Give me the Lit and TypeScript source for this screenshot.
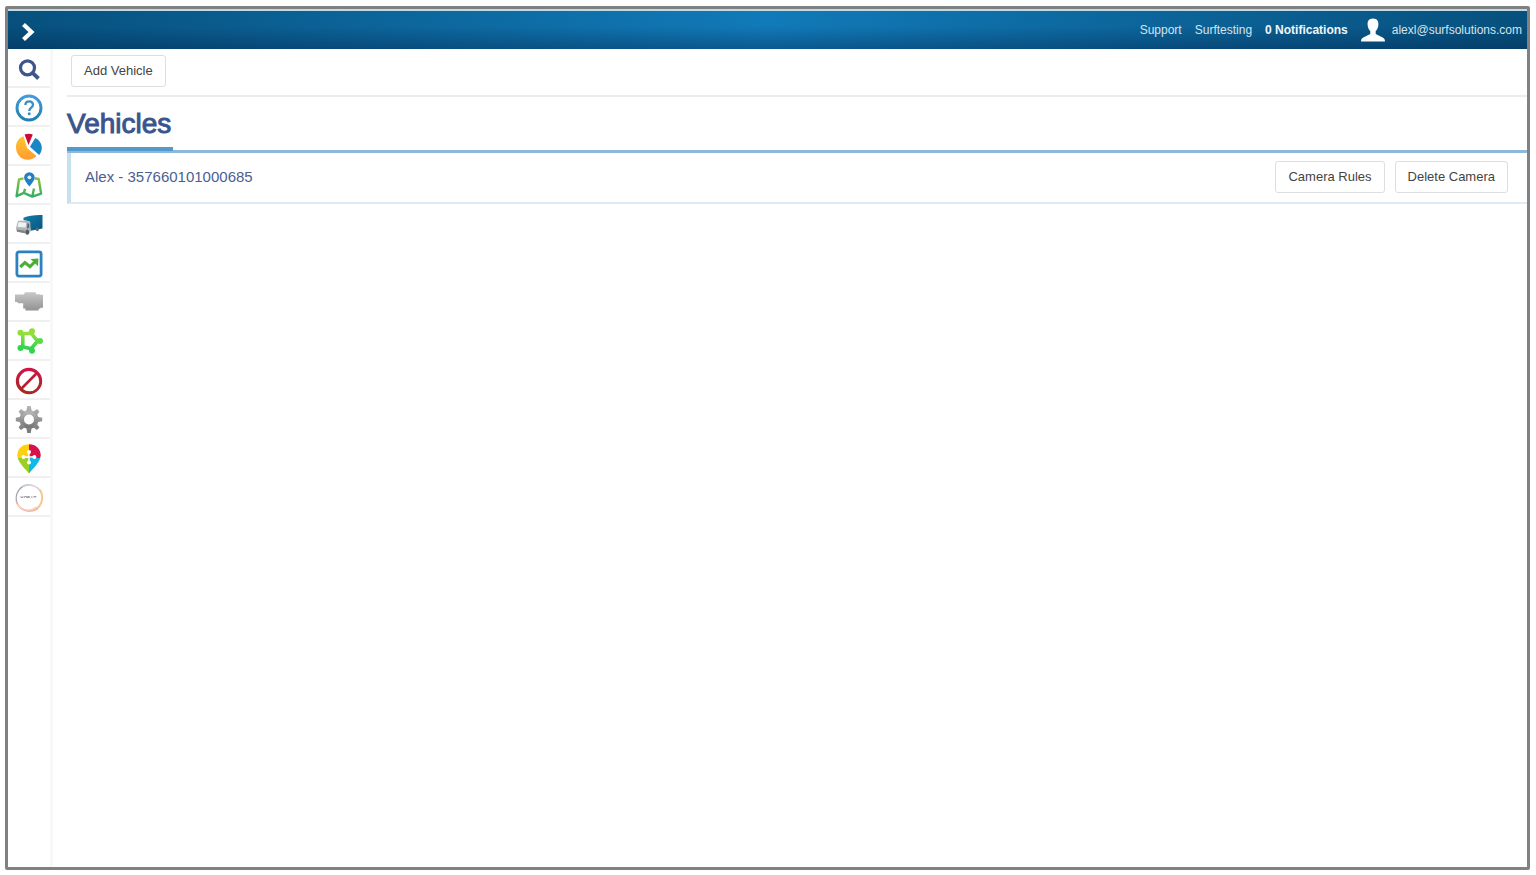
import { LitElement, html, css, svg } from "lit";
import { customElement, property, state } from "lit/decorators.js";

const icons = {
  search: svg`<circle cx="12.5" cy="12.8" r="7" fill="none" stroke="#3f568c" stroke-width="3.2"/><path d="M17.5 17.8 23.5 23.5" stroke="#3f568c" stroke-width="3.8"/>`,
  help: svg`<defs><linearGradient id="h" x2="0" y2="1"><stop stop-color="#429bdd"/><stop offset="1" stop-color="#2280ac"/></linearGradient></defs><circle cx="14" cy="14" r="12" fill="none" stroke="url(#h)" stroke-width="2.9"/><path d="M10.4 11c0-4.6 7.6-4.7 7.6-.3 0 2.9-3.7 3-3.7 6.2" fill="none" stroke="#378fc8" stroke-width="2.3"/><circle cx="14.2" cy="19.8" r="1.5" fill="#378fc8"/>`,
  chart: svg`<defs><linearGradient id="p" x2="0" y2="1"><stop stop-color="#ffc62e"/><stop offset="1" stop-color="#ff9b31"/></linearGradient></defs><path d="M12 15 8.6 3.2C3.8 4.7 1 9 1 14.2 1 21 6 26.8 12.5 26.8c3.5 0 6.6-1.1 9-3.7Z" fill="url(#p)"/><path d="M9.6 1.4c2.7-.9 5.5-.9 8.2 0L13.5 12Z" fill="#c80c38"/><path d="m15 13.7 5.2-8.6c6.4 2.8 9 10.9 3.9 17Z" fill="#1986c8"/>`,
  map: svg`<defs><linearGradient id="m" x2="0" y2="1"><stop stop-color="#8ac43c"/><stop offset="1" stop-color="#36ad63"/></linearGradient></defs><path d="M8.5 6.4 4 7.5 1.6 24.2l7.3-3.3 8.4 3.7 8.8-3L23.7 7l-4-.8M8.9 20.9l1.2-4.1m8.9-.4-1.7 8.2" fill="none" stroke="url(#m)" stroke-width="2.4" stroke-linejoin="round"/><path d="M14.4 14.5C11.5 10.7 9.1 8.3 9.1 5.5a5.3 5.3 0 0 1 10.6 0c0 2.8-2.4 5.2-5.3 9Z" fill="#237fc4"/><circle cx="14.4" cy="5.3" r="1.9" fill="#d8f2ff"/>`,
  truck: svg`<defs><linearGradient id="t" x2="1" y2="1"><stop stop-color="#147caa"/><stop offset="1" stop-color="#06577f"/></linearGradient></defs><path d="M8.5 6.8Q16 3.6 27.5 4v13.5L15.5 19.8 14.6 10.5 8.5 9Z" fill="url(#t)"/><path d="M3 9.7h9.6l2.8 1.7V21L12 22.6 2 20.7 1 17Z" fill="#b0b4b7"/><path d="m3.6 11 7.7.7-.8 4.9-8-.6Z" fill="#eef2f5"/><path d="m12.5 12.2 1.6.5v4l-2 .7Z" fill="#596168"/><path d="m1.6 18.6 8.3 1.2v2.4l-8-1.6Z" fill="#7c8286"/><ellipse cx="12.3" cy="21.2" rx="1.9" ry="2.6" fill="#555b60"/><ellipse cx="22.3" cy="18.2" rx="1.4" ry="2" fill="#59656d"/>`,
  trend: svg`<rect x="1.9" y="1.9" width="24.2" height="24.2" rx="2" fill="#fff" stroke="#2d81c0" stroke-width="2.8"/><path d="m5.2 17 4.8-4.4 5 4 5.7-5.6" fill="none" stroke="#4dae35" stroke-width="3.1"/><path d="m15.5 9 8-.4-.5 7.7Z" fill="#4dae35"/>`,
  engine: svg`<defs><linearGradient id="e" x2="0" y2="1"><stop stop-color="#c8c8c8"/><stop offset="1" stop-color="#929292"/></linearGradient></defs><path d="M0 5.600h8.800V4.500h1V3.200h11v2.100h4.100v.4H28v13h-2.700v1.100h-1.600v1.800H10.400v-2.200H8.200v-5.200H3.400L2 13H0Z" fill="url(#e)"/>`,
  geofence: svg`<defs><linearGradient id="g" x2="0" y2="1"><stop stop-color="#9be03a"/><stop offset="1" stop-color="#2bd44f"/></linearGradient></defs><path d="M7.8 5.800 16 5.200 22.600 13 16 20.800 7.800 18.800Z" fill="none" stroke="url(#g)" stroke-width="3.600" stroke-linejoin="round"/><g fill="#93dc3a"><circle cx="5.500" cy="4.700" r="3"/><circle cx="17" cy="3.200" r="3"/></g><circle cx="25" cy="13" r="3" fill="#5cda46"/><g fill="#35d44e"><circle cx="17" cy="22.800" r="3"/><circle cx="5.500" cy="20" r="3"/></g>`,
  block: svg`<defs><linearGradient id="b" x2="0" y2="1"><stop stop-color="#d11549"/><stop offset="1" stop-color="#a52a1c"/></linearGradient></defs><path fill="url(#b)" fill-rule="evenodd" d="M14 .8a13.2 13.2 0 1 1 0 26.4A13.2 13.2 0 0 1 14 .8Zm6 5.3A9.9 9.9 0 0 0 6.1 20ZM8 22A9.9 9.9 0 0 0 21.9 8Z"/>`,
  settings: svg`<defs><linearGradient id="s" x2="0" y2="1"><stop stop-color="#b5b5b5"/><stop offset="1" stop-color="#777"/></linearGradient></defs><g transform="translate(0 -1)"><path fill="none" stroke="url(#s)" stroke-width="4.6" d="M14 7.2a7.3 7.3 0 1 0 0 14.6 7.3 7.3 0 0 0 0-14.600Z"/><path fill="url(#s)" d="m12.3 1h3.4l1 5h-5.4Zm0 27h3.4l1-5h-5.4ZM.8 12.8v3.4l5 1v-5.4Zm26.4 0v3.4l-5 1v-5.4ZM3.6 6.500 6 4.100l4.200 2.800-3.800 3.800Zm20.800 0L22 4.100l-4.200 2.800 3.800 3.800ZM3.600 22.500 6 24.900l4.200-2.800-3.800-3.800Zm20.800 0L22 24.900l-4.200-2.800 3.800-3.800Z"/></g>`,
  marker: svg`<g transform="translate(0 -1)"><path d="M14 .2C7 .2 2.3 5 2.3 11.5l.5 3H14Z" fill="#ffcf12"/><path d="M14 .2c7 0 11.7 4.8 11.7 11.3l-.5 2.5H14Z" fill="#d9124c"/><path d="M2.7 14.1C4.2 19 9 24 14 29.5V14.1Z" fill="#9bcf22"/><path d="M25.3 14.1C23.8 19 19 24 14 29.5V14.1Z" fill="#13b8ea"/><g fill="#fff"><circle cx="14" cy="8" r="2"/><circle cx="8.6" cy="13" r="2"/><circle cx="19.4" cy="13" r="2"/><circle cx="14" cy="18.4" r="2"/><path d="M7 12.3h14v1.4H7ZM13.3 7h1.4v12h-1.4Z"/></g></g>`,
  ring: svg`<g fill="none" stroke-linecap="round"><path d="M2 19C-1 10 5 1 14 1" stroke="#a6a1af" stroke-width="1.3"/><path d="M8 1.9C16-1 24 3 26.4 9" stroke="#d8cfd2" stroke-width="1.6"/><path d="M25 6c5 8 1 18-7 20.5" stroke="#f6c58c" stroke-width="2"/><path d="M22.5 24.5C15 29.5 5 27 1.6 18" stroke="#f2b4a4" stroke-width="1.7"/><path d="M3 21c4 5 12 7 18 2" stroke="#f7d8bd" stroke-width="1.2"/><path d="M6 12.5v1h2v-1m1.5 1v-1h2v1m1-1h2v1h-2Zm3.5 1 1-1 1 1m1-1h2m-1 0v1" stroke="#9a9aa0" stroke-width=".9"/></g>`,
};

type IconName = keyof typeof icons;

@customElement("nav-icon")
class NavIcon extends LitElement {
  @property() name: IconName = "search";
  static styles = css`
    :host { display: block; }
    svg { display: block; width: 28px; height: 28px; overflow: visible; }
  `;
  render() {
    return html`<svg viewBox="0 0 28 28" aria-hidden="true">${icons[this.name]}</svg>`;
  }
}

@customElement("app-root")
class AppRoot extends LitElement {
  @state() private vehicles = [{ name: "Alex", imei: "357660101000685" }];

  private nav: { icon: IconName; label: string }[] = [
    { icon: "search", label: "Search" },
    { icon: "help", label: "Help" },
    { icon: "chart", label: "Dashboard" },
    { icon: "map", label: "Map" },
    { icon: "truck", label: "Vehicles" },
    { icon: "trend", label: "Reports" },
    { icon: "engine", label: "Diagnostics" },
    { icon: "geofence", label: "Geofences" },
    { icon: "block", label: "Restrictions" },
    { icon: "settings", label: "Settings" },
    { icon: "marker", label: "Places" },
    { icon: "ring", label: "Integrations" },
  ];

  static styles = css`
    :host {
      display: block;
      box-sizing: border-box;
      min-height: 100vh;
      padding: 6px 6px 5px 5px;
      background: #fff;
      font-family: "Liberation Sans", Arial, sans-serif;
      color: #444;
    }
    *, *::before, *::after { box-sizing: border-box; }
    a { color: inherit; text-decoration: none; }
    .frame {
      display: flex;
      flex-direction: column;
      min-height: calc(100vh - 11px);
      border: 3px solid #818181;
      border-radius: 2px;
    }
    .topbar {
      display: flex;
      align-items: center;
      justify-content: space-between;
      height: 40px;
      padding: 0 5px 0 13px;
      border-top: 2px solid #bcdcea;
      background:
        linear-gradient(to bottom, rgba(0, 30, 70, 0) 40%, rgba(0, 30, 70, 0.36)),
        linear-gradient(to right, #07507d, #117ab8 50%, #07507d);
      color: #d3e4ef;
      font-size: 12px;
      line-height: 16px;
    }
    .toggle {
      display: block;
      padding: 4px 0 0;
      border: 0;
      background: none;
    }
    .toggle svg { display: block; width: 14px; height: 20px; }
    .links { display: flex; align-items: center; gap: 13px; }
    .strong { font-weight: 700; color: #eef6fb; }
    .account { display: flex; align-items: center; gap: 7px; }
    .account svg { width: 24px; height: 24px; }
    .body { display: flex; flex: 1; }
    .side {
      flex: none;
      width: 45px;
      border-right: 3px solid #f8f8f8;
    }
    .side a {
      display: flex;
      align-items: center;
      justify-content: center;
      height: 39px;
      padding-top: 3px;
      border-bottom: 2px solid #f0f0f0;
    }
    main { flex: 1; min-width: 0; padding-left: 14px; }
    .tools {
      display: flex;
      padding: 6px 4px 8px;
      border-bottom: 2px solid #ececec;
    }
    .btn {
      height: 32px;
      padding: 0 12px;
      border: 1px solid #dedede;
      border-radius: 3px;
      background: #fff;
      color: #444;
      font: 13px/16px "Liberation Sans", Arial, sans-serif;
    }
    .heading { display: flex; border-bottom: 3px solid #8db8da; }
    h1 {
      margin: 0 0 -1px;
      padding: 10px 2px 6px 0;
      border-bottom: 4px solid #5599cc;
      color: #3b558c;
      font-size: 28px;
      font-weight: 400;
      line-height: 34px;
      -webkit-text-stroke: 1px #3b558c;
    }
    ul { margin: 0; padding: 0; list-style: none; }
    li {
      display: flex;
      align-items: center;
      gap: 10px;
      padding: 8px 19px 9px 14px;
      border-left: 4px solid #c5e1ee;
      border-bottom: 2px solid #deebf5;
    }
    .name { flex: 1; color: #4a6092; font-size: 15px; line-height: 20px; }
  `;

  render() {
    return html`
      <div class="frame">
        <header class="topbar">
          <button class="toggle" aria-label="Expand menu">
            <svg viewBox="0 0 14 20" aria-hidden="true"><path d="m2.5 2.5 8 7.5-8 7.5" fill="none" stroke="#fff" stroke-width="4.2"/></svg>
          </button>
          <nav class="links" aria-label="Account">
            <a href="#">Support</a>
            <a href="#">Surftesting</a>
            <a href="#" class="strong">0 Notifications</a>
            <a href="#" class="account">
              <svg viewBox="0 0 24 24" aria-hidden="true"><path d="M12 .5c4.2 0 5.6 2.8 5.4 6.2-.2 2.9-1.3 4.8-2.7 6.4v3l7 3.4c1.6.8 2.3 2 2.3 4H0c0-2 .7-3.2 2.3-4l7-3.4v-3C7.9 11.5 6.8 9.6 6.6 6.7 6.4 3.3 7.8.5 12 .5Z" fill="#fff"/></svg>
              <span>alexl@surfsolutions.com</span>
            </a>
          </nav>
        </header>
        <div class="body">
          <nav class="side" aria-label="Main">
            ${this.nav.map((n) => html`<a href="#" aria-label=${n.label}><nav-icon .name=${n.icon}></nav-icon></a>`)}
          </nav>
          <main>
            <div class="tools"><button class="btn">Add Vehicle</button></div>
            <div class="heading"><h1>Vehicles</h1></div>
            <ul>
              ${this.vehicles.map(
                (v) => html`<li>
                  <span class="name">${v.name} - ${v.imei}</span>
                  <button class="btn">Camera Rules</button>
                  <button class="btn">Delete Camera</button>
                </li>`
              )}
            </ul>
          </main>
        </div>
      </div>
    `;
  }
}
